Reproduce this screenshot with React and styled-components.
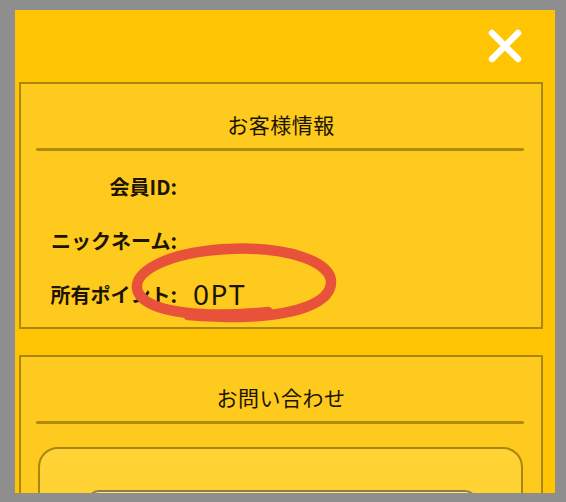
import React from "react";
import styled, { createGlobalStyle } from "styled-components";

const Global = createGlobalStyle`
  html, body { margin: 0; padding: 0; background: #8e8e8e; }
  * { box-sizing: border-box; }
`;

const Page = styled.div`
  height: 502px;
  padding: 10px 11px 9px 15px;
  font-family: "Noto Sans CJK JP", "Noto Sans", sans-serif;
  color: #1c1400;
`;

const Panel = styled.div`
  height: 483px;
  overflow: hidden;
  background: #ffc502;
  display: flex;
  flex-direction: column;
`;

const Header = styled.div`
  flex: none;
  height: 72px;
  display: flex;
  align-items: center;
  justify-content: flex-end;
  padding-right: 32px;
`;

const CloseButton = styled.button`
  width: 36px;
  height: 36px;
  padding: 0;
  border: none;
  background: none;
  display: flex;
  cursor: pointer;
`;

const Card = styled.section`
  flex: none;
  position: relative;
  margin: ${(p) => (p.$first ? "0" : "26px")} 12px 0 4px;
  border: 2px solid #a9860e;
  background: #fdca1d;
`;

const CardTitle = styled.h2`
  margin: 0;
  height: 64px;
  padding-top: 15px;
  display: flex;
  align-items: center;
  justify-content: center;
  font-size: 21px;
  font-weight: 400;
  letter-spacing: 0.5px;
`;

const Divider = styled.div`
  height: 3px;
  margin: 0 17px 0 15px;
  background: #b08a0a;
  border-radius: 2px;
`;

const Rows = styled.div`
  padding: 8px 0 6px;
`;

const Row = styled.div`
  height: 54px;
  display: flex;
  align-items: center;
`;

const Label = styled.span`
  width: 156px;
  text-align: right;
  font-size: 20px;
  font-weight: 700;
`;

const Value = styled.span`
  margin-left: 16px;
  font-family: "Noto Sans", "Noto Sans CJK JP", sans-serif;
  font-size: 28px;
  font-weight: 400;
  letter-spacing: 1.5px;
  line-height: 1;
`;

const Mark = styled.svg`
  position: absolute;
  left: 107px;
  top: 156px;
  overflow: visible;
  pointer-events: none;
`;

const InnerBox = styled.div`
  margin: 23px 18px 0 17px;
  height: 200px;
  border: 2px solid #a9860e;
  border-radius: 20px;
  background: linear-gradient(#ffd335, #ffd02a);
  padding: 41px 44px 0 47px;
`;

const Field = styled.div`
  height: 54px;
  border: 2px solid #8f7f4a;
  border-radius: 12px;
  background: #ffe27a;
`;

const rows = [
  { label: "会員ID:", value: "" },
  { label: "ニックネーム:", value: "" },
  { label: "所有ポイント:", value: "0PT" },
];

export default function App() {
  return (
    <>
      <Global />
      <Page>
        <Panel>
          <Header>
            <CloseButton aria-label="閉じる">
              <svg width="36" height="36" viewBox="0 0 36 36">
                <path
                  d="M5 5 L31 31 M31 5 L5 31"
                  stroke="#ffffff"
                  strokeWidth="6.5"
                  strokeLinecap="round"
                  fill="none"
                />
              </svg>
            </CloseButton>
          </Header>

          <Card $first>
            <CardTitle>お客様情報</CardTitle>
            <Divider />
            <Rows>
              {rows.map((r) => (
                <Row key={r.label}>
                  <Label>{r.label}</Label>
                  {r.value && <Value>{r.value}</Value>}
                </Row>
              ))}
            </Rows>
            <Mark width="215" height="90" viewBox="0 0 215 90">
              <path
                d="M140 72 C80 78, 20 74, 10 52 C2 32, 40 12, 100 9 C160 6, 203 22, 203 42 C203 62, 170 76, 110 77 C90 77, 75 76, 60 75"
                stroke="#e8513a"
                strokeWidth="10.5"
                strokeLinecap="round"
                strokeLinejoin="round"
                fill="none"
              />
            </Mark>
          </Card>

          <Card>
            <CardTitle>お問い合わせ</CardTitle>
            <Divider />
            <InnerBox>
              <Field />
            </InnerBox>
          </Card>
        </Panel>
      </Page>
    </>
  );
}
